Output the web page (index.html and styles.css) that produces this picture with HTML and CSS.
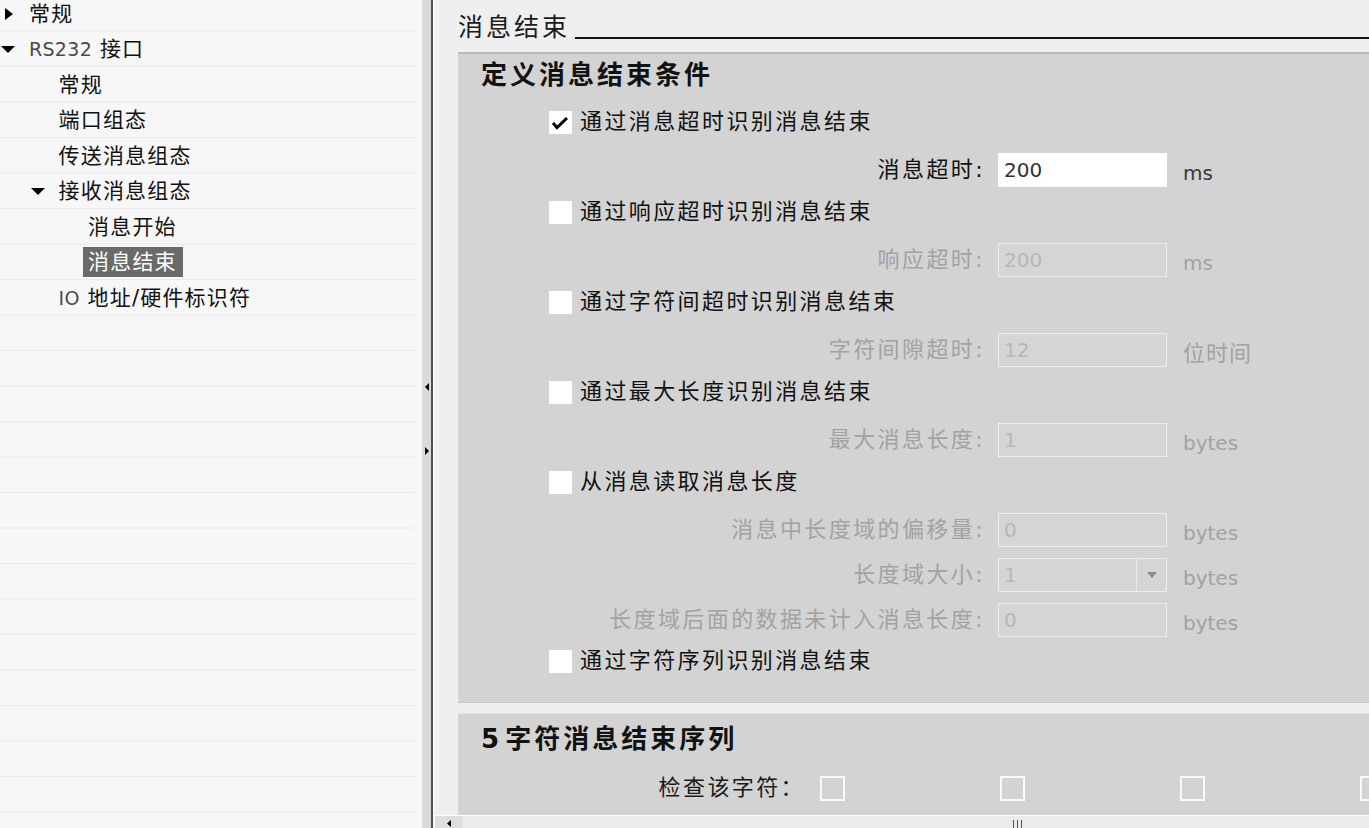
FILE: index.html
```html
<!DOCTYPE html>
<html lang="zh-CN">
<head>
<meta charset="utf-8">
<title>消息结束</title>
<link rel="stylesheet" href="styles.css">
</head>
<body>
<div class="app">
  <aside class="tree">
    <div class="tree-list">
      <div class="row l0"><span class="tw"><svg class="tri-r" width="8" height="12" viewBox="0 0 8 12"><polygon points="0,0 8,6 0,12"/></svg></span><span class="lbl">常规</span></div>
      <div class="row l0"><span class="tw"><svg class="tri-d" width="14" height="7" viewBox="0 0 14 7"><polygon points="0,0 14,0 7,7"/></svg></span><span class="lbl"><span class="lat">RS232</span> 接口</span></div>
      <div class="row l1"><span class="tw"></span><span class="lbl">常规</span></div>
      <div class="row l1"><span class="tw"></span><span class="lbl">端口组态</span></div>
      <div class="row l1"><span class="tw"></span><span class="lbl">传送消息组态</span></div>
      <div class="row l1"><span class="tw"><svg class="tri-d" width="14" height="7" viewBox="0 0 14 7"><polygon points="0,0 14,0 7,7"/></svg></span><span class="lbl">接收消息组态</span></div>
      <div class="row l2"><span class="tw"></span><span class="lbl">消息开始</span></div>
      <div class="row l2"><span class="tw"></span><span class="lbl sel">消息结束</span></div>
      <div class="row l1"><span class="tw"></span><span class="lbl"><span class="lat">IO</span> 地址/硬件标识符</span></div>
    </div>
  </aside>

  <div class="splitter">
    <div class="strip">
      <svg class="arr arr-l" width="4" height="8" viewBox="0 0 4 8"><polygon points="4,0 0,4 4,8"/></svg>
      <svg class="arr arr-r" width="4" height="8" viewBox="0 0 4 8"><polygon points="0,0 4,4 0,8"/></svg>
    </div>
    <div class="sp-line"></div>
    <div class="sp-edge"></div>
  </div>

  <main class="main">
    <div class="content">
      <div class="hdr">
        <span class="hdr-title">消息结束</span>
        <span class="hdr-line"></span>
      </div>

      <section class="panel p1">
        <div class="ptitle">定义消息结束条件</div>

        <div class="group first">
          <div class="cbrow"><span class="cb"><svg width="23" height="23" viewBox="0 0 23 23"><polyline points="4,12 8,16.5 18,7" fill="none" stroke="#000" stroke-width="3"/></svg></span><span class="cblbl">通过消息超时识别消息结束</span></div>
          <div class="frow"><span class="flabel">消息超时:</span><span class="inp"><span class="val">200</span></span><span class="unit">ms</span></div>
        </div>

        <div class="group">
          <div class="cbrow"><span class="cb"></span><span class="cblbl">通过响应超时识别消息结束</span></div>
          <div class="frow dis"><span class="flabel">响应超时:</span><span class="inp"><span class="val">200</span></span><span class="unit">ms</span></div>
        </div>

        <div class="group">
          <div class="cbrow"><span class="cb"></span><span class="cblbl">通过字符间超时识别消息结束</span></div>
          <div class="frow dis"><span class="flabel">字符间隙超时:</span><span class="inp"><span class="val">12</span></span><span class="unit cjk">位时间</span></div>
        </div>

        <div class="group">
          <div class="cbrow"><span class="cb"></span><span class="cblbl">通过最大长度识别消息结束</span></div>
          <div class="frow dis"><span class="flabel">最大消息长度:</span><span class="inp"><span class="val">1</span></span><span class="unit">bytes</span></div>
        </div>

        <div class="group">
          <div class="cbrow"><span class="cb"></span><span class="cblbl">从消息读取消息长度</span></div>
          <div class="frow dis"><span class="flabel">消息中长度域的偏移量:</span><span class="inp"><span class="val">0</span></span><span class="unit">bytes</span></div>
          <div class="frow dis"><span class="flabel">长度域大小:</span><span class="inp select"><span class="val">1</span><span class="dd"><svg width="10" height="6" viewBox="0 0 10 6"><polygon points="0,0 10,0 5,6"/></svg></span></span><span class="unit">bytes</span></div>
          <div class="frow dis"><span class="flabel">长度域后面的数据未计入消息长度:</span><span class="inp"><span class="val">0</span></span><span class="unit">bytes</span></div>
        </div>

        <div class="group last">
          <div class="cbrow"><span class="cb"></span><span class="cblbl">通过字符序列识别消息结束</span></div>
        </div>
      </section>

      <section class="panel p2">
        <div class="ptitle p2title">5 字符消息结束序列</div>
        <div class="frow2">
          <span class="flabel2">检查该字符：</span>
          <span class="ocbs">
            <span class="ocb"></span>
            <span class="ocb"></span>
            <span class="ocb"></span>
            <span class="ocb"></span>
          </span>
        </div>
      </section>
    </div>

    <div class="hscroll">
      <span class="hs-btn"><svg width="4" height="7" viewBox="0 0 4 7"><polygon points="4,0 0,3.5 4,7"/></svg></span>
      <span class="hs-track"><span class="grip"><i></i><i></i><i></i></span></span>
    </div>
  </main>
</div>
</body>
</html>
```

FILE: styles.css
```css
* { box-sizing: border-box; }

html, body {
  margin: 0;
  padding: 0;
  width: 1369px;
  height: 828px;
  overflow: hidden;
  background: #efefef;
  font-family: "DejaVu Sans", "Noto Sans CJK SC", sans-serif;
  color: #111;
}

.app {
  display: flex;
  width: 1369px;
  height: 828px;
}

/* ---------- tree ---------- */
.tree {
  width: 422px;
  flex: none;
  height: 100%;
  overflow: hidden;
  background-color: #f7f7f7;
  background-image: linear-gradient(to bottom, transparent 34.5px, #ebebeb 34.5px);
  background-size: 415px 35.5px;
  background-repeat: repeat-y;
  background-position: 0 -4px;
}

.tree-list {
  margin-top: -4px;
}

.row {
  height: 35.5px;
  display: flex;
  align-items: center;
  font-size: 21px;
  letter-spacing: 1.2px;
}

.row.l0 { padding-left: 0; }
.row.l1 { padding-left: 29.5px; }
.row.l2 { padding-left: 59px; }

.tw {
  width: 29px;
  flex: none;
  display: flex;
  align-items: center;
}

.tw svg { fill: #000; display: block; }
.tri-r { margin-left: 5px; }
.tri-d { margin-left: 1px; }
.row.l1 .tri-d { margin-left: 1.5px; }

.lbl {
  line-height: 30px;
  white-space: nowrap;
}

.lbl .lat {
  font-family: "DejaVu Sans", sans-serif;
  font-size: 19px;
  letter-spacing: 0.3px;
  color: #4a4a4a;
}

.lbl.sel {
  background: #6a6a6a;
  color: #fff;
  margin-left: -5px;
  padding: 0 6px 0 5px;
  height: 30px;
}

/* ---------- splitter ---------- */
.splitter {
  width: 13px;
  flex: none;
  display: flex;
  height: 100%;
}

.strip {
  width: 9px;
  background: #dadada;
  display: flex;
  flex-direction: column;
  align-items: flex-start;
  padding-top: 383px;
  padding-left: 3px;
}

.arr { fill: #000; display: block; }
.arr-r { margin-top: 56px; }

.sp-line {
  width: 2px;
  background: #505050;
}

.sp-edge {
  width: 2px;
  background: #fafafa;
}

/* ---------- main ---------- */
.main {
  flex: 1;
  min-width: 0;
  display: flex;
  flex-direction: column;
  height: 100%;
  background: #efefef;
}

.content {
  flex: 1;
  overflow: hidden;
  padding-left: 23px;
}

.hdr {
  height: 52px;
  display: flex;
  align-items: flex-start;
}

.hdr-title {
  margin-top: 10px;
  font-size: 25px;
  line-height: 36px;
  letter-spacing: 3px;
  color: #1a1a1a;
  white-space: nowrap;
}

.hdr-line {
  flex: 1;
  height: 2px;
  margin-top: 37px;
  margin-left: 5px;
  background: #111;
}

.panel {
  background: #d3d3d3;
}

.p1 {
  border-top: 2px solid #b9b9b9;
  border-bottom: 1px solid #c6c6c6;
  padding-bottom: 21px;
}

.p2 {
  margin-top: 10px;
  border-top: 1px solid #e2e2e2;
  height: 120px;
}

.ptitle {
  height: 42px;
  line-height: 42px;
  padding-left: 23px;
  font-size: 26px;
  font-weight: bold;
  letter-spacing: 3px;
  color: #111;
  white-space: nowrap;
}

.p2title {
  height: 50px;
  line-height: 50px;
  word-spacing: -9px;
}

.group { display: flex; flex-direction: column; margin-top: 5px; }
.group.first { margin-top: 6px; }
.group.last { margin-top: 4px; }

.cbrow {
  height: 40px;
  display: flex;
  align-items: center;
  padding-left: 91px;
}

.cb {
  width: 23px;
  height: 23px;
  background: #fff;
  flex: none;
  display: block;
}

.cb svg { display: block; }

.cblbl {
  margin-left: 8px;
  font-size: 22px;
  letter-spacing: 2.4px;
  line-height: 30px;
  color: #111;
  white-space: nowrap;
}

.frow {
  height: 34px;
  margin-top: 11px;
  display: flex;
  align-items: center;
}

.flabel {
  width: 527px;
  flex: none;
  text-align: right;
  font-size: 22px;
  letter-spacing: 2.4px;
  line-height: 30px;
  color: #111;
  white-space: nowrap;
}

.inp {
  width: 169px;
  height: 34px;
  flex: none;
  margin-left: 13px;
  background: #fff;
  display: flex;
  align-items: center;
}

.val {
  flex: 1;
  padding-left: 6px;
  font-family: "DejaVu Sans", sans-serif;
  font-size: 20px;
  color: #333;
}

.unit {
  margin-left: 16px;
  font-family: "DejaVu Sans", sans-serif;
  font-size: 20px;
  color: #3a3a3a;
  padding-top: 6px;
}

.unit.cjk {
  font-family: "Noto Sans CJK SC", sans-serif;
  font-size: 22px;
  letter-spacing: 1px;
  padding-top: 2px;
}

.frow.dis .flabel,
.frow.dis .unit { color: #a2a2a2; }

.frow.dis .inp {
  background: #d5d5d5;
  border: 1.5px solid #ededed;
}

.frow.dis .val { color: #b7b7b7; padding-left: 5px; }

.inp.select {
  border: 2px solid #f6f6f6;
}

.dd {
  width: 30px;
  height: 100%;
  border-left: 1.5px solid #ececec;
  display: flex;
  align-items: center;
  justify-content: center;
}

.dd svg { fill: #8a8a8a; display: block; }

.frow2 {
  height: 34px;
  margin-top: 7px;
  display: flex;
  align-items: center;
}

.flabel2 {
  width: 347px;
  flex: none;
  text-align: right;
  font-size: 22px;
  letter-spacing: 2.4px;
  line-height: 30px;
  color: #1a1a1a;
  white-space: nowrap;
}

.ocbs {
  display: flex;
  gap: 155px;
  margin-left: 15px;
}

.ocb {
  width: 25px;
  height: 25px;
  flex: none;
  border: 2px solid #fafafa;
  display: block;
}

/* ---------- horizontal scrollbar ---------- */
.hscroll {
  height: 13px;
  flex: none;
  display: flex;
  background: #ebebeb;
  border-top: 1px solid #ffffff;
}

.hs-btn {
  width: 28px;
  flex: none;
  background: #dedede;
  display: flex;
  align-items: flex-end;
  padding-left: 12px;
  padding-bottom: 1px;
}

.hs-btn svg { fill: #000; display: block; }

.hs-track {
  flex: 1;
  display: flex;
  align-items: flex-end;
  padding-left: 550px;
}

.grip {
  display: flex;
  gap: 3px;
}

.grip i {
  width: 1px;
  height: 8px;
  background: #555;
  display: block;
}
```
